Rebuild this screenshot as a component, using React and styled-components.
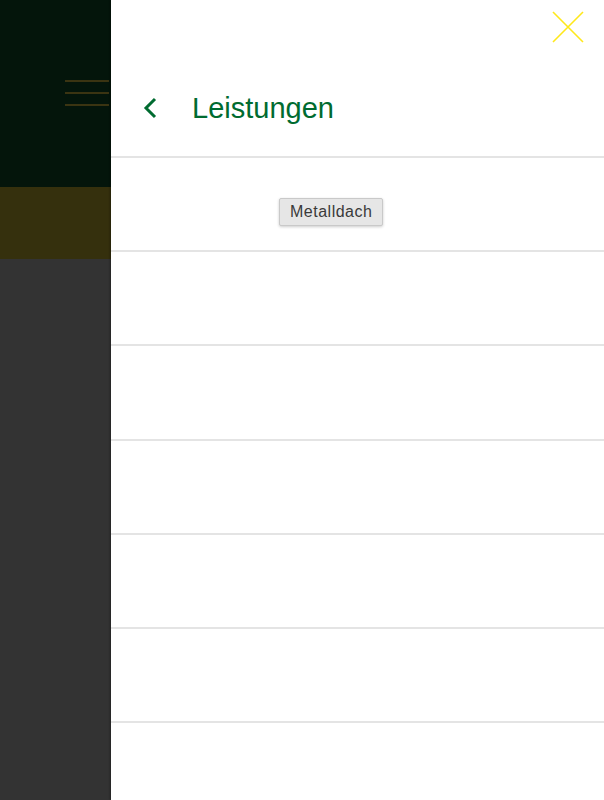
import React from "react";
import styled, { createGlobalStyle } from "styled-components";

const GlobalStyle = createGlobalStyle`
  html, body {
    margin: 0;
    padding: 0;
    background: #333333;
  }
  * {
    box-sizing: border-box;
  }
`;

const items = ["Metalldach", "", "", "", "", "", ""];

const App = () => {
  return (
    <>
      <GlobalStyle />
      <Screen>
        <Backdrop>
          <TopBar>
            <Burger>
              <BurgerLine />
              <BurgerLine />
              <BurgerLine />
            </Burger>
          </TopBar>
          <Band />
          <Rest />
        </Backdrop>
        <Panel>
          <CloseButton aria-label="close">
            <svg width="32" height="32" viewBox="0 0 32 32">
              <path d="M1 1 L31 31 M31 1 L1 31" stroke="#ffe81a" strokeWidth="1.6" fill="none" />
            </svg>
          </CloseButton>
          <Header>
            <BackIcon>
              <svg width="14" height="22" viewBox="0 0 14 22">
                <path d="M12 2 L3 11 L12 20" stroke="#006b30" strokeWidth="3" fill="none" />
              </svg>
            </BackIcon>
            <Title>Leistungen</Title>
          </Header>
          {items.map((label, i) => (
            <Row key={i}>{label && <TagButton>{label}</TagButton>}</Row>
          ))}
        </Panel>
      </Screen>
    </>
  );
};

export default App;

const Screen = styled.div`
  width: 604px;
  height: 800px;
  display: flex;
  overflow: hidden;
  font-family: "Liberation Sans", Arial, sans-serif;
`;

const Backdrop = styled.div`
  width: 111px;
  flex-shrink: 0;
  display: flex;
  flex-direction: column;
`;

const TopBar = styled.div`
  height: 187px;
  background-color: #04150b;
  display: flex;
  justify-content: flex-end;
  padding: 80px 2px 0px 0px;
`;

const Burger = styled.div`
  width: 44px;
  display: flex;
  flex-direction: column;
  gap: 10px;
`;

const BurgerLine = styled.div`
  height: 2px;
  background-color: #3b3412;
`;

const Band = styled.div`
  height: 72px;
  background-color: #35300d;
`;

const Rest = styled.div`
  flex: 1;
  background-color: #333333;
`;

const Panel = styled.div`
  position: relative;
  flex: 1;
  background-color: #fff;
  box-shadow: -1px 0px 2px rgba(0, 0, 0, 0.35);
  display: flex;
  flex-direction: column;
`;

const CloseButton = styled.div`
  position: absolute;
  top: 11px;
  right: 20px;
  width: 32px;
  height: 32px;
  cursor: pointer;
`;

const Header = styled.div`
  height: 158px;
  flex-shrink: 0;
  display: flex;
  align-items: center;
  padding: 60px 0px 0px 32px;
  border-bottom: 2px solid #e4e4e4;
`;

const BackIcon = styled.div`
  width: 14px;
  height: 22px;
  display: flex;
`;

const Title = styled.div`
  margin: 0px 0px 0px 35px;
  color: #006b30;
  font-size: 29px;
`;

const Row = styled.div`
  height: 94.2px;
  flex-shrink: 0;
  border-bottom: 2px solid #e4e4e4;
  padding: 40px 0px 0px 168px;
`;

const TagButton = styled.button`
  font-family: "Liberation Sans", Arial, sans-serif;
  height: 28px;
  padding: 0px 10px;
  font-size: 16px;
  letter-spacing: 0.5px;
  color: #3a3a3a;
  background-color: #e6e6e6;
  border: 1px solid #c9c9c9;
  border-radius: 2px;
  box-shadow: 0px 1px 3px rgba(0, 0, 0, 0.2);
  cursor: pointer;
`;
